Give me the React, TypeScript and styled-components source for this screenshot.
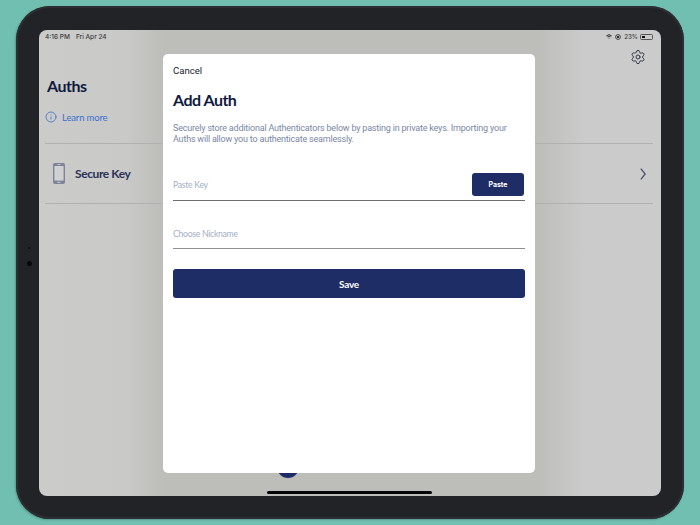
import styled, { createGlobalStyle } from 'styled-components';
import { Info, Settings } from 'lucide-react';

const GlobalStyle = createGlobalStyle`
  html, body {
    margin: 0;
    height: 525px;
    overflow: hidden;
    background: #70bfb0;
  }
`;

const Page = styled.div`
  width: 700px;
  height: 525px;
  box-sizing: border-box;
  padding: 6px 16px;
`;

const Tablet = styled.div`
  width: 668px;
  height: 513px;
  box-sizing: border-box;
  padding: 24px 23px 23px;
  background: #222327;
  border-radius: 34px;
  box-shadow: inset 0 0 0 2px #2c2e33, -1px 1px 2px rgba(60, 110, 100, 0.5);
`;

const Camera = styled.span<{ $size: number; $top: number }>`
  position: absolute;
  left: 12px;
  top: ${(p) => p.$top}px;
  width: ${(p) => p.$size}px;
  height: ${(p) => p.$size}px;
  margin-left: ${(p) => -p.$size / 2 - 22}px;
  border-radius: 50%;
  background: #08090b;
`;

const Screen = styled.div`
  position: relative;
  width: 622px;
  height: 466px;
  border-radius: 8px;
  background: linear-gradient(90deg, #cbcbc9 0%, #c9c9c7 14%, #bdbeba 20%, #bdbeba 80%, #cbcbcb 88%, #cbcbcb 100%);
  display: flex;
  flex-direction: column;
`;

const StatusBar = styled.div`
  height: 13px;
  padding: 0 8px 0 6px;
  display: flex;
  align-items: center;
  justify-content: space-between;
  font-family: Inter, sans-serif;
  font-size: 6.5px;
  font-weight: 500;
  color: #3a3a3c;
`;

const StatusGroup = styled.div`
  display: flex;
  align-items: center;
  gap: 3px;
`;

const DateText = styled.span`
  margin-left: 6px;
`;

const Percent = styled.span`
  margin-right: -1px;
  font-size: 6.2px;
`;

const Battery = styled.span`
  display: flex;
  width: 13px;
  height: 6px;
  padding: 1px;
  box-sizing: border-box;
  border: 0.5px solid #555;
  border-radius: 1.5px;
`;

const BatteryLevel = styled.span`
  width: 3px;
  background: #111;
`;

const TopRow = styled.div`
  height: 20px;
  padding: 6px 15px 0 0;
  box-sizing: border-box;
  display: flex;
  justify-content: flex-end;
  align-items: flex-start;
  color: #34374a;
`;

const Title = styled.h1`
  margin: 13px 0 0 8px;
  font-family: Lato, sans-serif;
  font-size: 16px;
  line-height: 20px;
  font-weight: 700;
  letter-spacing: -0.5px;
  color: #101a3e;
`;

const LearnRow = styled.div`
  margin: 15px 0 0 6px;
  height: 12px;
  display: flex;
  align-items: center;
  gap: 5px;
  font-family: Lato, sans-serif;
  font-size: 9.5px;
  letter-spacing: -0.15px;
  color: #3b70d0;
`;

const AuthRow = styled.div`
  margin: 20px 8px 0 6px;
  height: 59px;
  padding: 0 7px 0 8px;
  border-top: 1px solid #b1b2af;
  border-bottom: 1px solid #b1b2af;
  display: flex;
  align-items: center;
  color: #2a3258;
`;

const AuthName = styled.span`
  margin-left: 10px;
  flex: 1;
  font-family: Lato, sans-serif;
  font-size: 12px;
  font-weight: 700;
  letter-spacing: -0.4px;
`;

const Fab = styled.span`
  position: absolute;
  left: 238px;
  top: 426px;
  width: 22px;
  height: 22px;
  border-radius: 50%;
  background: #1d2c66;
`;

const HomeBar = styled.span`
  position: absolute;
  left: 228px;
  bottom: 2px;
  width: 165px;
  height: 3px;
  border-radius: 2px;
  background: #050505;
`;

const Modal = styled.div`
  position: absolute;
  left: 124px;
  top: 24px;
  width: 372px;
  height: 419px;
  box-sizing: border-box;
  padding: 10px;
  border-radius: 5px;
  background: #fff;
  display: flex;
  flex-direction: column;
`;

const Cancel = styled.div`
  font-family: Roboto, sans-serif;
  font-size: 9.6px;
  line-height: 13px;
  color: #22242c;
`;

const ModalTitle = styled.h2`
  margin: 11px 0 0;
  font-family: Lato, sans-serif;
  font-size: 16px;
  line-height: 24px;
  font-weight: 700;
  letter-spacing: -0.5px;
  color: #101a3e;
`;

const Description = styled.p`
  margin: 11px 0 0;
  font-family: Roboto, sans-serif;
  font-size: 9px;
  line-height: 11px;
  letter-spacing: -0.2px;
  color: #7a88a6;
`;

const Field = styled.div<{ $height: number; $top: number; $line: string; $drop?: number }>`
  margin-top: ${(p) => p.$top}px;
  height: ${(p) => p.$height}px;
  padding-bottom: ${(p) => p.$drop ?? 0}px;
  border-bottom: 1px solid ${(p) => p.$line};
  display: flex;
  align-items: center;
  justify-content: space-between;
`;

const Placeholder = styled.span`
  font-family: Lato, sans-serif;
  font-size: 8.7px;
  letter-spacing: -0.3px;
  color: #a3afc6;
`;

const PasteButton = styled.button`
  width: 52px;
  height: 23px;
  margin-right: 1px;
  padding: 0;
  border: 0;
  border-radius: 3px;
  background: #1f2d66;
  color: #fff;
  font-family: Inter, sans-serif;
  font-size: 7px;
  font-weight: 700;
`;

const SaveButton = styled.button`
  margin-top: 20px;
  height: 29px;
  padding: 0;
  border: 0;
  border-radius: 3px;
  background: #1e2d66;
  color: #fff;
  font-family: Lato, sans-serif;
  font-size: 10px;
  font-weight: 700;
  letter-spacing: -0.2px;
`;

function PhoneIcon() {
  return (
    <svg width="12" height="21" viewBox="0 0 12 21">
      <rect width="12" height="21" rx="2" fill="#7d8296" />
      <rect x="1.4" y="3" width="9.2" height="14.6" fill="#d0d1d2" />
      <rect x="4.5" y="1" width="3" height="0.9" fill="#d0d1d2" />
      <rect x="4.5" y="18.8" width="3" height="1" fill="#d0d1d2" />
    </svg>
  );
}

function WifiIcon() {
  return (
    <svg width="6" height="5" viewBox="0 0 8 6" fill="none" stroke="#222" strokeWidth="1.2">
      <path d="M0.5 2.2a5 5 0 0 1 7 0" />
      <path d="M1.9 3.5a3 3 0 0 1 4.2 0" />
      <circle cx="4" cy="5" r="0.7" fill="#222" stroke="none" />
    </svg>
  );
}

function RotationLockIcon() {
  return (
    <svg width="6" height="6" viewBox="0 0 6 6" fill="none">
      <circle cx="3" cy="3" r="2.4" stroke="#333" strokeWidth="0.9" />
      <rect x="2" y="2" width="2" height="2" fill="#333" />
    </svg>
  );
}

function RowChevron() {
  return (
    <svg width="6" height="12" viewBox="0 0 6 12" fill="none" stroke="#4a5272" strokeWidth="1.3">
      <path d="M0.8 0.6L5.2 6L0.8 11.4" />
    </svg>
  );
}

export default function App() {
  return (
    <>
      <GlobalStyle />
      <Page>
        <Tablet>
          <Screen>
            <Camera $size={2} $top={217} />
            <Camera $size={5} $top={231} />
            <StatusBar>
              <div>
                4:16 PM<DateText>Fri Apr 24</DateText>
              </div>
              <StatusGroup>
                <WifiIcon />
                <RotationLockIcon />
                <Percent>23%</Percent>
                <Battery>
                  <BatteryLevel />
                </Battery>
              </StatusGroup>
            </StatusBar>
            <TopRow>
              <Settings size={16} strokeWidth={1.5} />
            </TopRow>
            <Title>Auths</Title>
            <LearnRow>
              <Info size={12} strokeWidth={1.6} />
              Learn more
            </LearnRow>
            <AuthRow>
              <PhoneIcon />
              <AuthName>Secure Key</AuthName>
              <RowChevron />
            </AuthRow>
            <Fab />
            <HomeBar />
            <Modal>
              <Cancel>Cancel</Cancel>
              <ModalTitle>Add Auth</ModalTitle>
              <Description>
                Securely store additional Authenticators below by pasting in private keys. Importing your Auths will
                allow you to authenticate seamlessly.
              </Description>
              <Field $top={24} $height={31} $line="#6f6f6f">
                <Placeholder>Paste Key</Placeholder>
                <PasteButton>Paste</PasteButton>
              </Field>
              <Field $top={22} $height={21} $drop={4} $line="#8f8f8f">
                <Placeholder>Choose Nickname</Placeholder>
              </Field>
              <SaveButton>Save</SaveButton>
            </Modal>
          </Screen>
        </Tablet>
      </Page>
    </>
  );
}
